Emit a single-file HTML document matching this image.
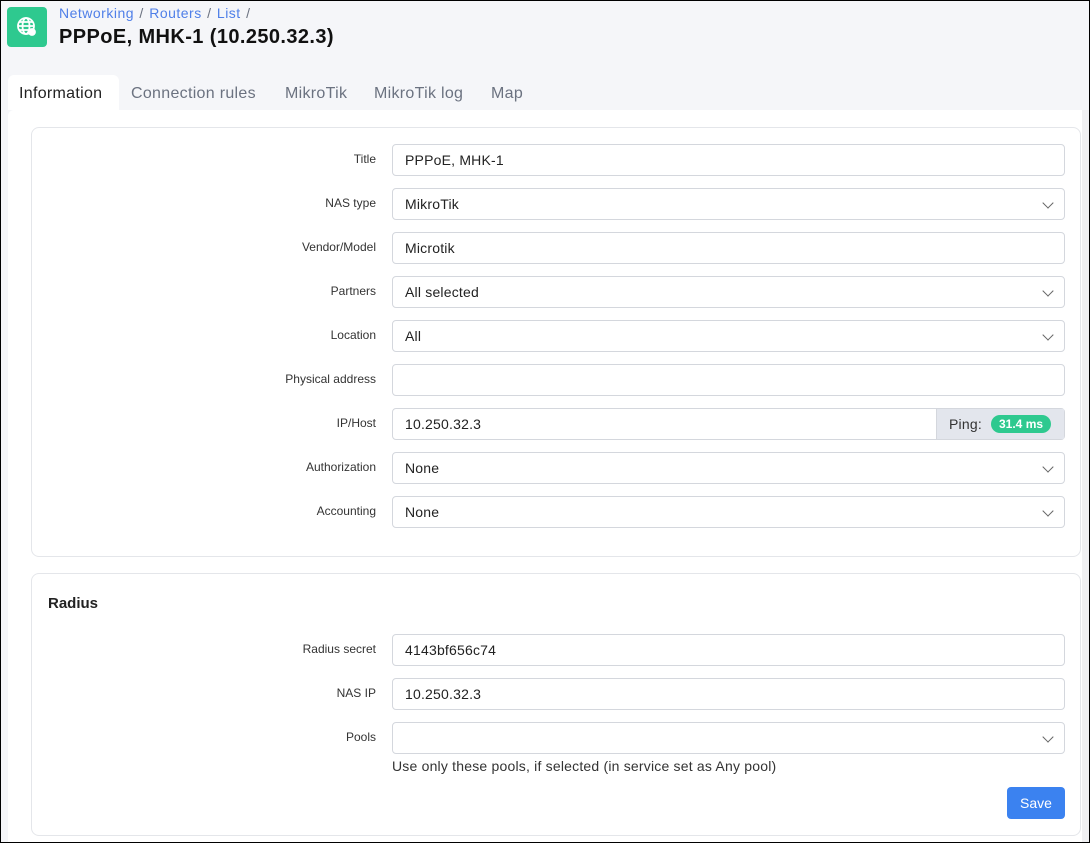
<!DOCTYPE html>
<html><head><meta charset="utf-8"><style>
*{box-sizing:border-box;margin:0;padding:0}
body{width:1090px;height:843px;overflow:hidden;font-family:"Liberation Sans",sans-serif;background:#f5f6f9;position:relative}
.frame{position:absolute;left:0;top:0;width:1090px;height:843px;border:1px solid #000;pointer-events:none;z-index:10}
.logo{position:absolute;left:7px;top:7px;width:40px;height:40px;background:#2ec98f;border-radius:4px}
.bc{position:absolute;left:59px;top:5px;font-size:14px;color:#6b7280;letter-spacing:0.5px;word-spacing:1px}
.bc a{color:#4f7fe8;text-decoration:none}
h1{position:absolute;left:59px;top:26px;font-size:20px;font-weight:bold;color:#111;letter-spacing:0.4px}
.tabs{position:absolute;left:0;top:75px;height:35px;width:600px;font-size:16px;color:#6b7280;letter-spacing:0.3px}
.tabs div{position:absolute;top:0;height:35px;padding-top:10px}
.tabs .act{left:8px;width:111px;padding-left:11px;background:#fff;color:#222;border-radius:6px 6px 0 0}
.panel{position:absolute;left:8px;top:110px;width:1074px;height:733px;background:#fff;border-radius:6px 0 0 0}
.scroll{position:absolute;left:1082px;top:110px;width:7px;height:733px;background:#f0f0f2}
.card{position:absolute;left:31px;width:1050px;border:1px solid #e4e6ea;border-radius:8px;background:#fff}
.row{position:absolute;left:0;width:100%;height:32px}
.lbl{position:absolute;right:704px;top:8px;font-size:12px;color:#333;text-align:right;white-space:nowrap}
.in{position:absolute;left:360px;width:673px;top:0;height:32px;border:1px solid #d4d7dd;border-radius:4px;font-size:14px;color:#222;padding:7px 12px;letter-spacing:0.2px}
.chev{position:absolute;right:12px;top:10px;width:8px;height:8px;border-right:1.3px solid #666;border-bottom:1.3px solid #666;transform:rotate(45deg)}
.ping{position:absolute;right:0;top:0;height:30px;width:128px;background:#e3e6ed;border-left:1px solid #d4d7dd;font-size:14px;padding:7px 12px;color:#333}
.badge{position:absolute;left:54px;top:6px;background:#2ec98f;color:#fff;font-weight:bold;font-size:12px;border-radius:10px;padding:2px 8px;letter-spacing:0}
</style></head><body>
<div class="logo"><svg width="40" height="40" viewBox="0 0 40 40" fill="none" stroke="#fff" stroke-width="1.8"><circle cx="19" cy="19" r="8"/><ellipse cx="19" cy="19" rx="3.5" ry="8"/><path d="M11 19h16M12.5 15h13M12.5 23h13"/><circle cx="25" cy="25" r="3" fill="#fff"/></svg></div>
<div class="bc"><a>Networking</a> / <a>Routers</a> / <a>List</a> /</div>
<h1>PPPoE, MHK-1 (10.250.32.3)</h1>
<div class="tabs"><div class="act">Information</div><div style="left:131px">Connection rules</div><div style="left:285px">MikroTik</div><div style="left:374px">MikroTik log</div><div style="left:491px">Map</div></div>
<div class="panel"></div><div class="scroll"></div>
<div class="card" style="top:127px;height:430px">
<div class="row" style="top:16px"><div class="lbl">Title</div><div class="in">PPPoE, MHK-1</div></div>
<div class="row" style="top:60px"><div class="lbl">NAS type</div><div class="in">MikroTik<span class="chev"></span></div></div>
<div class="row" style="top:104px"><div class="lbl">Vendor/Model</div><div class="in">Microtik</div></div>
<div class="row" style="top:148px"><div class="lbl">Partners</div><div class="in">All selected<span class="chev"></span></div></div>
<div class="row" style="top:192px"><div class="lbl">Location</div><div class="in">All<span class="chev"></span></div></div>
<div class="row" style="top:236px"><div class="lbl">Physical address</div><div class="in"></div></div>
<div class="row" style="top:280px"><div class="lbl">IP/Host</div><div class="in">10.250.32.3<div class="ping">Ping:<span class="badge">31.4 ms</span></div></div></div>
<div class="row" style="top:324px"><div class="lbl">Authorization</div><div class="in">None<span class="chev"></span></div></div>
<div class="row" style="top:368px"><div class="lbl">Accounting</div><div class="in">None<span class="chev"></span></div></div>
</div>
<div class="card" style="top:573px;height:263px">
<div style="position:absolute;left:16px;top:21px;font-size:15px;font-weight:bold;color:#222">Radius</div>
<div class="row" style="top:60px"><div class="lbl">Radius secret</div><div class="in">4143bf656c74</div></div>
<div class="row" style="top:104px"><div class="lbl">NAS IP</div><div class="in">10.250.32.3</div></div>
<div class="row" style="top:148px"><div class="lbl">Pools</div><div class="in"><span class="chev"></span></div></div>
<div style="position:absolute;left:360px;top:184px;font-size:14px;color:#333;letter-spacing:0.2px">Use only these pools, if selected (in service set as Any pool)</div>
<div style="position:absolute;left:975px;top:213px;width:58px;height:32px;background:#3b82f0;color:#fff;border-radius:4px;font-size:14px;text-align:center;line-height:32px">Save</div>
</div>
<div class="frame"></div>
</body></html>
